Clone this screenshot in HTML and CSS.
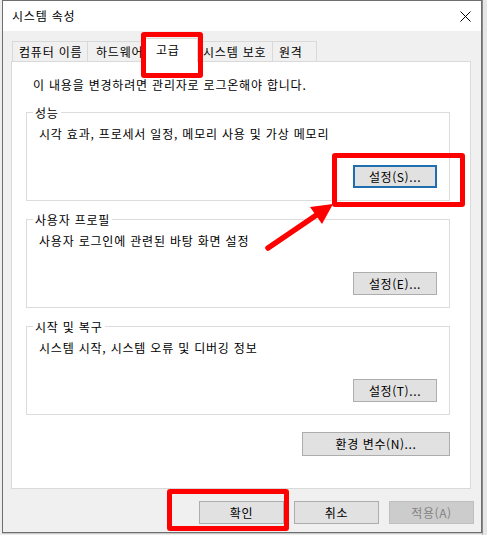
FILE: index.html
```html
<!DOCTYPE html>
<html lang="ko">
<head>
<meta charset="utf-8">
<title>시스템 속성</title>
<link rel="stylesheet" href="styles.css">
</head>
<body>
<div class="window">
  <div class="titlebar">
    <span class="title">시스템 속성</span>
    <span class="close" aria-label="닫기">
      <svg width="11" height="11" viewBox="0 0 11 11"><path d="M0.5 0.5 L10.5 10.5 M10.5 0.5 L0.5 10.5" stroke="#000" stroke-width="1" fill="none"/></svg>
    </span>
  </div>
  <div class="client">
    <div class="tabs">
      <div class="tab tab-name">컴퓨터 이름</div>
      <div class="tab tab-hw">하드웨어</div>
      <div class="tab tab-adv active">고급</div>
      <div class="tab tab-prot">시스템 보호</div>
      <div class="tab tab-remote">원격</div>
    </div>
    <div class="panel">
      <p class="note">이 내용을 변경하려면 관리자로 로그온해야 합니다.</p>

      <fieldset class="group">
        <legend>성능</legend>
        <p class="desc">시각 효과, 프로세서 일정, 메모리 사용 및 가상 메모리</p>
        <div class="actions"><button class="btn focused">설정(S)...</button></div>
      </fieldset>

      <fieldset class="group">
        <legend>사용자 프로필</legend>
        <p class="desc">사용자 로그인에 관련된 바탕 화면 설정</p>
        <div class="actions"><button class="btn">설정(E)...</button></div>
      </fieldset>

      <fieldset class="group">
        <legend>시작 및 복구</legend>
        <p class="desc">시스템 시작, 시스템 오류 및 디버깅 정보</p>
        <div class="actions"><button class="btn">설정(T)...</button></div>
      </fieldset>

      <div class="env-row"><button class="btn wide">환경 변수(N)...</button></div>
    </div>
    <div class="footer">
      <button class="btn dlg">확인</button>
      <button class="btn dlg">취소</button>
      <button class="btn dlg" disabled>적용(A)</button>
    </div>
  </div>
</div>

<div class="backdrop-edge"></div>
<div class="mark mark-tab"></div>
<div class="mark mark-perf"></div>
<div class="mark mark-ok"></div>
<svg class="arrow" width="487" height="535" viewBox="0 0 487 535">
  <line x1="268" y1="248" x2="318" y2="214" stroke="#ff0000" stroke-width="5.5" stroke-linecap="round"/>
  <polygon points="333,204 310,207 322,224" fill="#ff0000"/>
</svg>
</body>
</html>
```

FILE: styles.css
```css
* {
  box-sizing: border-box;
}

html, body {
  margin: 0;
  padding: 0;
}

body {
  width: 487px;
  height: 535px;
  background: #eeeeee;
  font-family: "Noto Sans CJK KR", "Noto Sans", sans-serif;
  font-size: 12px;
  letter-spacing: 0.8px;
  color: #000;
  position: relative;
  overflow: hidden;
}

/* dialog frame */
.window {
  margin-left: 2px;
  width: 480px;
  height: 533px;
  border: 1px solid #6e6e6e;
  background: #f0f0f0;
  box-shadow: 1px 0 0 #8a8a8a, 0 1px 0 #c8c8c8;
  display: flex;
  flex-direction: column;
  position: relative;
  z-index: 1;
}

.titlebar {
  height: 30px;
  background: #ffffff;
  display: flex;
  align-items: center;
  justify-content: space-between;
  flex-shrink: 0;
}

.title {
  padding-left: 9px;
  line-height: 16px;
}

.close {
  display: flex;
  margin-right: 10px;
}

.client {
  flex: 1;
  padding: 7px 0 0 8px;
  display: flex;
  flex-direction: column;
}

/* tab strip */
.tabs {
  display: flex;
  align-items: flex-end;
  padding-left: 1px;
  height: 23px;
  position: relative;
  z-index: 1;
}

.tab {
  height: 20px;
  border: 1px solid #d9d9d9;
  border-bottom: none;
  background: #f0f0f0;
  line-height: 19px;
  padding-left: 6px;
  white-space: nowrap;
}

.tab-name { width: 76px; }
.tab-hw { width: 60px; margin-left: -1px; padding-left: 8px; }
.tab-prot { width: 77px; }
.tab-remote { width: 45px; margin-left: -1px; }

.tab.active {
  width: 54px;
  height: 24px;
  margin-left: -3px;
  margin-right: -2px;
  margin-bottom: -1px;
  background: #ffffff;
  padding-top: 1px;
  padding-left: 11px;
  line-height: 20px;
  position: relative;
  z-index: 2;
}

/* tab page */
.panel {
  width: 460px;
  height: 428px;
  background: #ffffff;
  border: 1px solid #d9d9d9;
  padding-top: 15px;
  flex-shrink: 0;
}

.note {
  margin: 0 0 12px 0;
  padding-left: 21px;
  line-height: 16px;
}

.group {
  width: 424px;
  margin: 0 0 11px 14px;
  padding: 0 0 12px 0;
  border: 1px solid #dcdcdc;
  min-inline-size: 0;
}

.group legend {
  margin-left: 6px;
  padding: 0 2px;
  line-height: 15px;
  font-size: 12px;
}

.desc {
  margin: 6px 0 0 0;
  padding-left: 12px;
  line-height: 16px;
}

.actions {
  display: flex;
  justify-content: flex-end;
  padding-right: 12px;
  margin-top: 23px;
}

.env-row {
  width: 424px;
  margin: 17px 0 0 14px;
  display: flex;
  justify-content: flex-end;
}

/* push buttons */
.btn {
  width: 84px;
  height: 23px;
  padding: 0;
  border: 1px solid #adadad;
  background: #e1e1e1;
  font-family: "Noto Sans CJK KR", "Noto Sans", sans-serif;
  font-size: 12px;
  letter-spacing: 0.6px;
  color: #000;
  line-height: 20px;
}

.btn.focused {
  border-color: #1f6fb0;
  box-shadow: inset 0 0 0 1px #1f6fb0;
}

.btn.wide {
  width: 148px;
  height: 24px;
}

.btn.dlg {
  width: 85px;
}

.btn:disabled {
  background: #cccccc;
  border-color: #bfbfbf;
  color: #838383;
}

.footer {
  display: flex;
  justify-content: flex-end;
  gap: 10px;
  margin-top: 12px;
  padding-right: 7px;
}

/* the window lying behind the dialog on the right */
.backdrop-edge {
  position: absolute;
  left: 482px;
  top: 0;
  width: 5px;
  height: 535px;
  background: #e6e6e6;
  border-left: 1px solid #b4b4b4;
}

/* red annotation frames drawn over the dialog */
.mark {
  position: absolute;
  z-index: 2;
  border: 5px solid #ff0000;
  border-radius: 3px;
}

.mark-tab {
  left: 141px;
  top: 32px;
  width: 62px;
  height: 46px;
}

.mark-perf {
  left: 332px;
  top: 153px;
  width: 133px;
  height: 54px;
}

.mark-ok {
  left: 167px;
  top: 489px;
  width: 122px;
  height: 42px;
}

.arrow {
  position: absolute;
  left: 0;
  top: 0;
  z-index: 2;
  pointer-events: none;
}
```
